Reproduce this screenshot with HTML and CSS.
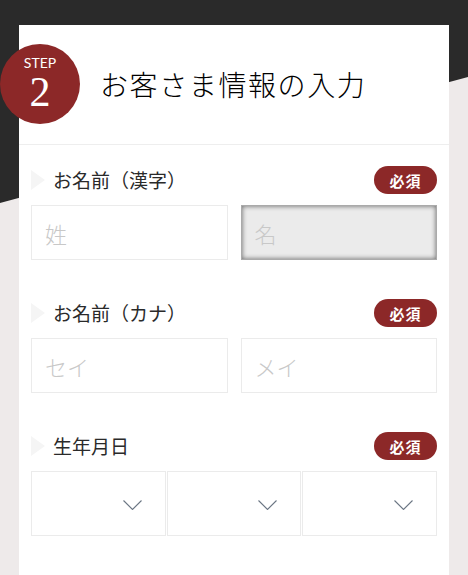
FILE: index.html
```html
<!DOCTYPE html>
<html lang="ja">
<head>
  <meta charset="UTF-8">
  <title>お客さま情報の入力</title>
  <link rel="stylesheet" href="styles.css">
</head>
<body>
  <div class="fundo"></div>

  <main class="cartao">
    <header class="cabecalho">
      <div class="passo">
        <span class="passo-rotulo">STEP</span>
        <span class="passo-numero">2</span>
      </div>
      <h1 class="titulo">お客さま情報の入力</h1>
    </header>

    <section class="campos">
      <div class="campo">
        <div class="campo-topo">
          <span class="rotulo">お名前（漢字）</span>
          <span class="obrigatorio">必須</span>
        </div>
        <div class="linha-dupla">
          <input type="text" class="entrada" placeholder="姓">
          <input type="text" class="entrada ativa" placeholder="名">
        </div>
      </div>

      <div class="campo">
        <div class="campo-topo">
          <span class="rotulo">お名前（カナ）</span>
          <span class="obrigatorio">必須</span>
        </div>
        <div class="linha-dupla">
          <input type="text" class="entrada" placeholder="セイ">
          <input type="text" class="entrada" placeholder="メイ">
        </div>
      </div>

      <div class="campo">
        <div class="campo-topo">
          <span class="rotulo">生年月日</span>
          <span class="obrigatorio">必須</span>
        </div>
        <div class="linha-tripla">
          <div class="seletor">
            <svg width="19" height="10" viewBox="0 0 19 10"><path d="M0.5 0.5 L9.5 9.5 L18.5 0.5" fill="none" stroke="#6b7684" stroke-width="1.1"/></svg>
          </div>
          <div class="seletor">
            <svg width="19" height="10" viewBox="0 0 19 10"><path d="M0.5 0.5 L9.5 9.5 L18.5 0.5" fill="none" stroke="#6b7684" stroke-width="1.1"/></svg>
          </div>
          <div class="seletor">
            <svg width="19" height="10" viewBox="0 0 19 10"><path d="M0.5 0.5 L9.5 9.5 L18.5 0.5" fill="none" stroke="#6b7684" stroke-width="1.1"/></svg>
          </div>
        </div>
      </div>
    </section>
  </main>
</body>
</html>
```

FILE: styles.css
```css
html {
  background-color: #eeeaea;
}
body {
  margin: 0;
  font-family: "Noto Sans CJK JP", "Noto Sans", sans-serif;
  color: #333;
}
.fundo {
  position: absolute;
  top: 0;
  left: 0;
  width: 100%;
  height: 203px;
  background-color: #2a2a2a;
  clip-path: polygon(0 0, 100% 0, 100% 77px, 0 203px);
}
.cartao {
  position: relative;
  margin: 25px 19px 0;
  background-color: #fff;
  padding-bottom: 20px;
}
.cabecalho {
  display: flex;
  align-items: center;
  padding: 19px 0 20px;
  border-bottom: 1px solid #eee;
}
.passo {
  box-sizing: border-box;
  width: 80px;
  height: 80px;
  margin-left: -19px;
  padding-top: 12px;
  border-radius: 50%;
  background-color: #8c2828;
  color: #fff;
  display: flex;
  flex-direction: column;
  align-items: center;
}
.passo-rotulo {
  font-family: Lato, "Liberation Sans", sans-serif;
  font-size: 14px;
  line-height: 14px;
}
.passo-numero {
  font-family: "Liberation Serif", serif;
  font-size: 42px;
  line-height: 40px;
  margin-top: 2px;
}
.titulo {
  margin: 0 0 0 20px;
  font-size: 28px;
  font-weight: 300;
  letter-spacing: 1.6px;
  color: #000;
}
.campos {
  padding: 21px 12px 0;
}
.campo {
  margin-bottom: 39px;
}
.campo-topo {
  display: flex;
  align-items: center;
  justify-content: space-between;
  margin-bottom: 11px;
}
.rotulo {
  display: flex;
  align-items: center;
  font-size: 19px;
  line-height: 28px;
  color: #2a2a2a;
}
.rotulo::before {
  content: "";
  width: 0;
  height: 0;
  border-top: 10px solid transparent;
  border-bottom: 10px solid transparent;
  border-left: 14px solid #f5f5f5;
  margin-right: 8px;
}
.obrigatorio {
  width: 63px;
  height: 28px;
  border-radius: 14px;
  background-color: #8c2828;
  color: #fff;
  font-size: 15px;
  font-weight: 700;
  display: flex;
  align-items: center;
  justify-content: center;
  letter-spacing: 1px;
}
.linha-dupla {
  display: grid;
  grid-template-columns: 1fr 1fr;
  gap: 13px;
}
.entrada {
  box-sizing: border-box;
  height: 55px;
  width: 100%;
  border: 1px solid #ebebeb;
  padding: 0 13px;
  font-family: "Noto Sans CJK JP", sans-serif;
  font-size: 22px;
  font-weight: 300;
  color: #333;
  background-color: #fff;
  outline: none;
}
.entrada::placeholder {
  color: #c8c8c8;
}
.entrada.ativa {
  background-color: #ebebeb;
  border-color: #aaa;
  box-shadow: inset 0 0 5px #666;
}
.linha-tripla {
  display: grid;
  grid-template-columns: 1fr 1fr 1fr;
  gap: 1px;
}
.seletor {
  box-sizing: border-box;
  height: 65px;
  border: 1px solid #ebebeb;
  display: flex;
  align-items: center;
  justify-content: flex-end;
  padding: 3px 23px 0 0;
}
```
